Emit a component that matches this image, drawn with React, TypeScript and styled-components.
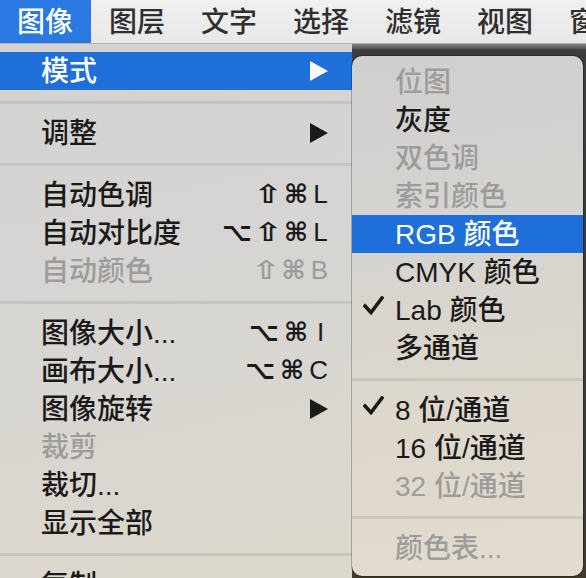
import React from 'react';
import styled, { createGlobalStyle } from 'styled-components';

const GlobalStyle = createGlobalStyle`
  *, *::before, *::after {
    box-sizing: border-box;
  }
  html, body {
    margin: 0;
    padding: 0;
    background: #3a3a3a;
  }
  body {
    font-family: 'Liberation Sans', 'Noto Sans CJK SC', sans-serif;
  }
`;

type MainItem =
  | { kind: 'sep' }
  | { kind: 'item'; label: string; keys?: string; submenu?: boolean; disabled?: boolean; active?: boolean };

type SubItem =
  | { kind: 'sep' }
  | { kind: 'item'; label: string; checked?: boolean; disabled?: boolean; active?: boolean };

const BAR_ITEMS = ['图像', '图层', '文字', '选择', '滤镜', '视图', '窗口'];

const MAIN_ITEMS: MainItem[] = [
  { kind: 'item', label: '模式', submenu: true, active: true },
  { kind: 'sep' },
  { kind: 'item', label: '调整', submenu: true },
  { kind: 'sep' },
  { kind: 'item', label: '自动色调', keys: '⇧⌘L' },
  { kind: 'item', label: '自动对比度', keys: '⌥⇧⌘L' },
  { kind: 'item', label: '自动颜色', keys: '⇧⌘B', disabled: true },
  { kind: 'sep' },
  { kind: 'item', label: '图像大小...', keys: '⌥⌘I' },
  { kind: 'item', label: '画布大小...', keys: '⌥⌘C' },
  { kind: 'item', label: '图像旋转', submenu: true },
  { kind: 'item', label: '裁剪', disabled: true },
  { kind: 'item', label: '裁切...' },
  { kind: 'item', label: '显示全部' },
  { kind: 'sep' },
  { kind: 'item', label: '复制' },
];

const SUB_ITEMS: SubItem[] = [
  { kind: 'item', label: '位图', disabled: true },
  { kind: 'item', label: '灰度' },
  { kind: 'item', label: '双色调', disabled: true },
  { kind: 'item', label: '索引颜色', disabled: true },
  { kind: 'item', label: 'RGB 颜色', active: true },
  { kind: 'item', label: 'CMYK 颜色' },
  { kind: 'item', label: 'Lab 颜色', checked: true },
  { kind: 'item', label: '多通道' },
  { kind: 'sep' },
  { kind: 'item', label: '8 位/通道', checked: true },
  { kind: 'item', label: '16 位/通道' },
  { kind: 'item', label: '32 位/通道', disabled: true },
  { kind: 'sep' },
  { kind: 'item', label: '颜色表...', disabled: true },
];

const textColor = (p: { $active?: boolean; $disabled?: boolean }) =>
  p.$active ? '#ffffff' : p.$disabled ? '#9d9c9a' : '#1b1a19';

const Page = styled.div`
  width: 586px;
  height: 578px;
  overflow: hidden;
  display: flex;
  flex-direction: column;
  background: #3a3a3a;
`;

const MenuBar = styled.div`
  display: flex;
  flex-shrink: 0;
  height: 44px;
  margin-left: -1px;
  background: linear-gradient(to bottom, #f0f0f0, #e8e8e8);
  border-bottom: 1px solid #b3b3b3;
`;

const BarItem = styled.div<{ $active?: boolean }>`
  display: flex;
  align-items: center;
  padding: 0 18px 4px;
  font-size: 28px;
  font-weight: 500;
  white-space: nowrap;
  color: ${(p) => (p.$active ? '#ffffff' : '#2f2f2f')};
  background: ${(p) => (p.$active ? '#2a78e2' : 'transparent')};
`;

const Body = styled.div`
  display: flex;
  flex: 1;
  min-height: 0;
`;

const MainMenu = styled.div`
  width: 352px;
  flex-shrink: 0;
  display: flex;
  flex-direction: column;
  padding-top: 8px;
  background: linear-gradient(168deg, #d3d3d3 0%, #d6d5d3 40%, #ddd8cd 100%);
`;

const Backdrop = styled.div`
  flex: 1;
  display: flex;
  align-items: flex-start;
  padding: 12px 3px 0 0;
  background: linear-gradient(
    to bottom,
    #7b7c7c 0px,
    #5d5e5e 4px,
    #3c3c3c 6px,
    #3a3a3a 80%,
    #423b2c 100%
  );
`;

const SubMenu = styled.div`
  flex: 1;
  display: flex;
  flex-direction: column;
  padding: 7px 0 9px;
  border-radius: 10px;
  overflow: hidden;
  box-shadow: 0 0 0 1px rgba(0, 0, 0, 0.25);
  background: linear-gradient(172deg, #cfcfcf 0%, #d6d4d0 35%, #ded8cc 70%, #e2dcd0 100%);
`;

const MainRow = styled.div<{ $active?: boolean; $disabled?: boolean }>`
  display: flex;
  align-items: center;
  justify-content: space-between;
  flex-shrink: 0;
  height: 38px;
  padding: 0 24px 5px 41px;
  font-size: 28px;
  font-weight: 500;
  white-space: nowrap;
  color: ${textColor};
  background: ${(p) => (p.$active ? '#1f6fdb' : 'transparent')};
`;

const SubRow = styled.div<{ $active?: boolean; $disabled?: boolean }>`
  display: flex;
  align-items: center;
  flex-shrink: 0;
  height: 38px;
  padding-bottom: 5px;
  font-size: 28px;
  font-weight: 500;
  white-space: nowrap;
  color: ${textColor};
  background: ${(p) => (p.$active ? '#1f6fdb' : 'transparent')};
`;

const CheckCell = styled.span`
  display: flex;
  justify-content: center;
  align-items: center;
  flex: 0 0 43px;
  padding-bottom: 4px;
`;

const Separator = styled.div`
  display: flex;
  align-items: center;
  flex-shrink: 0;
  height: 24px;

  &::before {
    content: '';
    flex: 1;
    height: 3px;
    background: rgba(0, 0, 0, 0.08);
  }
`;

const Keys = styled.span`
  display: flex;
  align-items: center;
  gap: 5px;
  padding-top: 3px;
  font-family: 'Liberation Sans', 'DejaVu Sans', sans-serif;
  font-size: 26px;
  font-weight: 400;
`;

const Key = styled.span<{ $symbol?: boolean; $wide?: boolean }>`
  display: inline-block;
  min-width: ${(p) => (p.$wide ? '20px' : '15px')};
  text-align: center;
  font-weight: ${(p) => (p.$symbol ? 700 : 400)};
  transform: ${(p) => (p.$wide ? 'scaleX(1.35)' : 'none')};
`;

const Arrow = ({ color }: { color: string }) => (
  <svg width="18" height="20" viewBox="0 0 18 20" style={{ marginTop: 5 }}>
    <polygon points="0,0 18,10 0,20" fill={color} />
  </svg>
);

const Check = () => (
  <svg width="21" height="19" viewBox="0 0 21 19">
    <path d="M2 10 L8 16.5 L19 2" fill="none" stroke="#1b1a19" strokeWidth="3.6" strokeLinecap="square" />
  </svg>
);

export default function App() {
  return (
    <Page>
      <GlobalStyle />
      <MenuBar>
        {BAR_ITEMS.map((name, i) => (
          <BarItem key={name} $active={i === 0}>
            {name}
          </BarItem>
        ))}
      </MenuBar>
      <Body>
        <MainMenu>
          {MAIN_ITEMS.map((it, i) =>
            it.kind === 'sep' ? (
              <Separator key={i} />
            ) : (
              <MainRow key={i} $active={it.active} $disabled={it.disabled}>
                <span>{it.label}</span>
                {it.submenu && <Arrow color={it.active ? '#ffffff' : '#1b1a19'} />}
                {it.keys && (
                  <Keys>
                    {Array.from(it.keys).map((k, j) => (
                      <Key key={j} $symbol={!/[A-Z]/.test(k)} $wide={k === '⇧'}>
                        {k}
                      </Key>
                    ))}
                  </Keys>
                )}
              </MainRow>
            )
          )}
        </MainMenu>
        <Backdrop>
          <SubMenu>
            {SUB_ITEMS.map((it, i) =>
              it.kind === 'sep' ? (
                <Separator key={i} />
              ) : (
                <SubRow key={i} $active={it.active} $disabled={it.disabled}>
                  <CheckCell>{it.checked && <Check />}</CheckCell>
                  <span>{it.label}</span>
                </SubRow>
              )
            )}
          </SubMenu>
        </Backdrop>
      </Body>
    </Page>
  );
}
